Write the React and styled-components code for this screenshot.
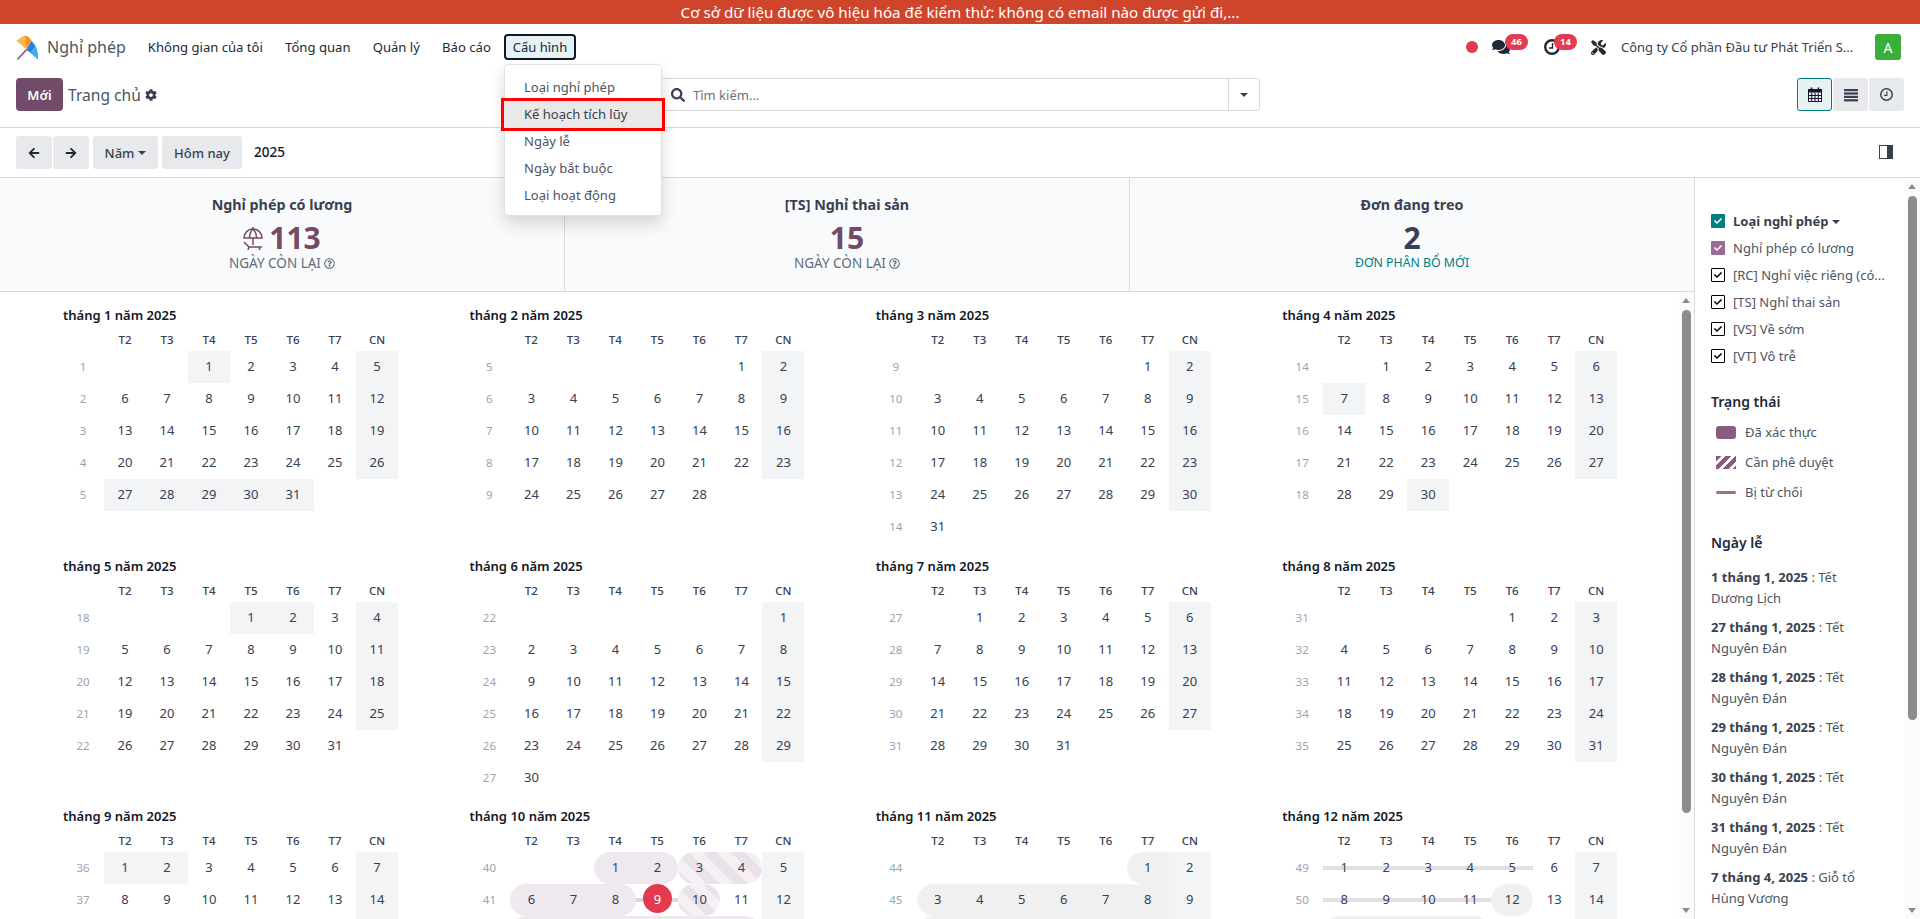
import React from "react";
import styled, { createGlobalStyle } from "styled-components";
import {
  FaArrowLeft,
  FaArrowRight,
  FaCheck,
  FaCog,
  FaComments,
  FaRegQuestionCircle,
  FaSearch,
  FaTools,
} from "react-icons/fa";

const GlobalStyle = createGlobalStyle`
  html, body {
    margin: 0;
    height: 100%;
    overflow: hidden;
    background: #fff;
    font-family: "Noto Sans", "Liberation Sans", sans-serif;
    font-size: 13px;
    color: #374151;
  }
  * { box-sizing: border-box; }
`;

const WEEK_DAYS = ["T2", "T3", "T4", "T5", "T6", "T7", "CN"];

// ngày lễ theo tháng
const HOLIDAYS = {
  0: [1, 27, 28, 29, 30, 31],
  3: [7, 30],
  4: [1, 2],
  8: [1, 2],
};

const EVENTS = {
  9: {
    1: { kind: "solid", span: 2 },
    3: { kind: "hatch", span: 2 },
    6: { kind: "solid", span: 3 },
    9: { kind: "line", span: 1 },
    10: { kind: "hatch", span: 1 },
    13: { kind: "solid", span: 6 },
  },
  10: {
    1: { kind: "grey", span: 2 },
    3: { kind: "grey", span: 7 },
    10: { kind: "grey", span: 7 },
  },
  11: {
    1: { kind: "greyLine", span: 5 },
    8: { kind: "greyLine", span: 4 },
    12: { kind: "grey", span: 1 },
    15: { kind: "grey", span: 4 },
  },
};

const isoWeek = (d) => {
  const t = new Date(Date.UTC(d.getFullYear(), d.getMonth(), d.getDate()));
  const day = t.getUTCDay() || 7;
  t.setUTCDate(t.getUTCDate() + 4 - day);
  const yearStart = new Date(Date.UTC(t.getUTCFullYear(), 0, 1));
  return Math.ceil(((t - yearStart) / 86400000 + 1) / 7);
};

const buildWeeks = (month) => {
  const first = new Date(2025, month, 1);
  const total = new Date(2025, month + 1, 0).getDate();
  const offset = (first.getDay() + 6) % 7;
  const weeks = [];
  let days = Array(offset).fill(null);
  for (let n = 1; n <= total; n++) {
    days.push(n);
    if (days.length === 7) {
      weeks.push(days);
      days = [];
    }
  }
  if (days.length) {
    weeks.push(days.concat(Array(7 - days.length).fill(null)));
  }
  return weeks;
};

const Month = ({ month }) => {
  const weeks = buildWeeks(month);
  const holidays = HOLIDAYS[month] || [];
  const events = EVENTS[month] || {};
  return (
    <MonthBox>
      <MonthTitle>
        tháng {month + 1} năm 2025
      </MonthTitle>
      <DayGrid>
        <HeadCell />
        {WEEK_DAYS.map((d) => (
          <HeadCell key={d}>{d}</HeadCell>
        ))}
        {weeks.map((week) => {
          const firstDay = week.find((d) => d !== null);
          return (
            <React.Fragment key={firstDay}>
              <WeekNo>{isoWeek(new Date(2025, month, firstDay))}</WeekNo>
              {week.map((day, i) => {
                const ev = events[day];
                const today = month === 9 && day === 9;
                return (
                  <DayCell
                    key={i}
                    $off={day !== null && (i === 6 || holidays.includes(day))}
                  >
                    {ev && <Bar $kind={ev.kind} $span={ev.span} />}
                    {today && <Today />}
                    <DayNo $today={today}>{day}</DayNo>
                  </DayCell>
                );
              })}
            </React.Fragment>
          );
        })}
      </DayGrid>
    </MonthBox>
  );
};

const Logo = () => (
  <svg width="23" height="25" viewBox="18 13 70 75">
    <path d="M22 87 L50 57" stroke="#8f5a86" strokeWidth="5" fill="none" />
    <path d="M20 30 C 28 22 36 17 45 15 L50 57 Z" fill="#fcb849" />
    <path d="M45 15 C 52 14 60 20 65 30 L50 57 Z" fill="#f7931e" />
    <path d="M65 30 L78 47 L62 67 L50 57 Z" fill="#2180e8" />
    <path d="M65 30 C 78 42 87 62 85 87 L62 67 L78 47 Z" fill="#39adfb" />
  </svg>
);

const Umbrella = () => (
  <svg width="20" height="23" viewBox="0 0 20 23" fill="none" stroke="#714B67" strokeWidth="1.5">
    <path d="M1 11 C 1 6 5 2 10 2 C 15 2 19 6 19 11 Z" />
    <path d="M10 0 V2 M10 2 C 7 5 6.5 8 6.5 11 M10 2 C 13 5 13.5 8 13.5 11 M10 11 V18" />
    <path d="M1 15 L6 20 H19 M6 20 L5 23 M16 20 L17 23" />
  </svg>
);

const ThickClock = ({ size = 16, color = "#1f2937", width = 2.4 }) => (
  <svg width={size} height={size} viewBox="0 0 16 16" fill="none" stroke={color}>
    <circle cx="8" cy="8" r={8 - width / 2} strokeWidth={width} />
    <path d="M8.5 4 V9 H5" strokeWidth="1.4" />
  </svg>
);

const CalendarIcon = () => (
  <svg width="14" height="15" viewBox="0 0 14 15" fill="none">
    <rect x="0.5" y="2.5" width="13" height="12" stroke="#1f1235" />
    <rect x="0.5" y="2.5" width="13" height="3" fill="#1f1235" />
    <path d="M3.5 0.5 V3.5 M10.5 0.5 V3.5" stroke="#1f1235" strokeWidth="1.6" />
    <path d="M0.5 8.5 H13.5 M0.5 11.5 H13.5 M3.7 5.5 V14.5 M7 5.5 V14.5 M10.3 5.5 V14.5" stroke="#1f1235" />
  </svg>
);

const BarsIcon = () => (
  <svg width="14" height="14" viewBox="0 0 14 14" fill="#374151">
    <rect x="0" y="1" width="14" height="2.2" />
    <rect x="0" y="4.4" width="14" height="2.2" />
    <rect x="0" y="7.8" width="14" height="2.2" />
    <rect x="0" y="11.2" width="14" height="2.2" />
  </svg>
);

const PanelIcon = () => (
  <svg width="14" height="14" viewBox="0 0 14 14">
    <rect x="0.5" y="0.5" width="13" height="13" fill="#fff" stroke="#374151" />
    <rect x="8" y="0.5" width="5.5" height="13" fill="#374151" />
  </svg>
);

const Caret = styled.span`
  display: inline-block;
  margin-left: 4px;
  vertical-align: middle;
  border-top: 4px solid currentColor;
  border-left: 4px solid transparent;
  border-right: 4px solid transparent;
`;

const App = () => (
  <>
    <GlobalStyle />
    <Page>
      <Banner>Cơ sở dữ liệu được vô hiệu hóa để kiểm thử: không có email nào được gửi đi,...</Banner>
      <NavBar>
        <AppBrand>
          <Logo />
          <span>Nghỉ phép</span>
        </AppBrand>
        <NavItem>Không gian của tôi</NavItem>
        <NavItem>Tổng quan</NavItem>
        <NavItem>Quản lý</NavItem>
        <NavItem>Báo cáo</NavItem>
        <MenuAnchor>
          <NavActive>Cấu hình</NavActive>
          <Dropdown>
            <DropItem>Loại nghỉ phép</DropItem>
            <DropItem $marked>Kế hoạch tích lũy</DropItem>
            <DropItem>Ngày lễ</DropItem>
            <DropItem>Ngày bắt buộc</DropItem>
            <DropItem>Loại hoạt động</DropItem>
          </Dropdown>
        </MenuAnchor>
        <NavRight>
          <RedDot />
          <Systray $w={52}>
            <FaComments size={18} color="#1f2937" />
            <Badge $left={13}>46</Badge>
          </Systray>
          <Systray $w={46.5}>
            <ThickClock />
            <Badge $left={10}>14</Badge>
          </Systray>
          <ToolSlot>
            <FaTools size={15} color="#1f2937" />
          </ToolSlot>
          <Company>Công ty Cổ phần Đầu tư Phát Triển S...</Company>
          <Avatar>A</Avatar>
        </NavRight>
      </NavBar>

      <ControlPanel>
        <PanelLeft>
          <PrimaryBtn>Mới</PrimaryBtn>
          <Crumb>Trang chủ</Crumb>
          <FaCog size={12} color="#374151" />
        </PanelLeft>
        <SearchBox>
          <SearchInput>
            <FaSearch size={14} color="#374151" />
            <span>Tìm kiếm...</span>
          </SearchInput>
          <SearchCaret>
            <Caret />
          </SearchCaret>
        </SearchBox>
        <ViewSwitch>
          <ViewBtn $active>
            <CalendarIcon />
          </ViewBtn>
          <ViewBtn>
            <BarsIcon />
          </ViewBtn>
          <ViewBtn>
            <ThickClock size={13} color="#374151" width={1.8} />
          </ViewBtn>
        </ViewSwitch>
      </ControlPanel>

      <DateBar>
        <BtnGroup>
          <GreyBtn $w={36}>
            <FaArrowLeft size={12} color="#1f2937" />
          </GreyBtn>
          <GreyBtn $w={36}>
            <FaArrowRight size={12} color="#1f2937" />
          </GreyBtn>
        </BtnGroup>
        <GreyBtn $w={65}>
          Năm
          <Caret />
        </GreyBtn>
        <GreyBtn $w={80}>Hôm nay</GreyBtn>
        <YearLabel>2025</YearLabel>
        <PanelToggle>
          <PanelIcon />
        </PanelToggle>
      </DateBar>

      <Body>
        <MainCol>
          <Stats>
            <Stat>
              <StatTitle>Nghỉ phép có lương</StatTitle>
              <StatNumber>
                <Umbrella />
                113
              </StatNumber>
              <StatNote>
                NGÀY CÒN LẠI <FaRegQuestionCircle size={11} />
              </StatNote>
            </Stat>
            <Stat>
              <StatTitle>[TS] Nghỉ thai sản</StatTitle>
              <StatNumber>15</StatNumber>
              <StatNote>
                NGÀY CÒN LẠI <FaRegQuestionCircle size={11} />
              </StatNote>
            </Stat>
            <Stat>
              <StatTitle>Đơn đang treo</StatTitle>
              <StatNumber $dark>2</StatNumber>
              <StatNote $link>ĐƠN PHÂN BỔ MỚI</StatNote>
            </Stat>
          </Stats>
          <CalendarWrap>
            <YearGrid>
              {Array.from({ length: 12 }, (_, m) => (
                <Month key={m} month={m} />
              ))}
            </YearGrid>
            <ScrollTrack>
              <ScrollArrow $dir="up" />
              <ScrollThumb $top={18} $height={503} />
              <ScrollArrow $dir="down" />
            </ScrollTrack>
          </CalendarWrap>
        </MainCol>

        <Side>
          <FilterRow>
            <Check $tone="teal">
              <FaCheck size={8} color="#fff" />
            </Check>
            <FilterHead>
              Loại nghỉ phép
              <Caret />
            </FilterHead>
          </FilterRow>
          <FilterRow>
            <Check $tone="plum">
              <FaCheck size={8} color="#fff" />
            </Check>
            <span>Nghỉ phép có lương</span>
          </FilterRow>
          {["[RC] Nghỉ việc riêng (có...", "[TS] Nghỉ thai sản", "[VS] Về sớm", "[VT] Vô trễ"].map((t) => (
            <FilterRow key={t}>
              <Check>
                <FaCheck size={8} color="#000" />
              </Check>
              <span>{t}</span>
            </FilterRow>
          ))}
          <SideHeading $mt={22} $mb={4}>Trạng thái</SideHeading>
          <LegendRow>
            <Swatch $kind="solid" />
            Đã xác thực
          </LegendRow>
          <LegendRow>
            <Swatch $kind="hatch" />
            Cần phê duyệt
          </LegendRow>
          <LegendRow>
            <Swatch $kind="line" />
            Bị từ chối
          </LegendRow>
          <SideHeading $mt={24.5} $mb={13}>Ngày lễ</SideHeading>
          <HolidayList>
            <Holiday><b>1 tháng 1, 2025</b> : Tết Dương Lịch</Holiday>
            <Holiday><b>27 tháng 1, 2025</b> : Tết Nguyên Đán</Holiday>
            <Holiday><b>28 tháng 1, 2025</b> : Tết Nguyên Đán</Holiday>
            <Holiday><b>29 tháng 1, 2025</b> : Tết Nguyên Đán</Holiday>
            <Holiday><b>30 tháng 1, 2025</b> : Tết Nguyên Đán</Holiday>
            <Holiday><b>31 tháng 1, 2025</b> : Tết Nguyên Đán</Holiday>
            <Holiday><b>7 tháng 4, 2025</b> : Giỗ tổ Hùng Vương</Holiday>
          </HolidayList>
          <ScrollTrack>
            <ScrollArrow $dir="up" />
            <ScrollThumb $top={18} $height={524} />
            <ScrollArrow $dir="down" />
          </ScrollTrack>
        </Side>
      </Body>
    </Page>
  </>
);

const Page = styled.div`
  display: flex;
  flex-direction: column;
  width: 1920px;
  height: 919px;
  overflow: hidden;
`;

const Banner = styled.div`
  flex: 0 0 24px;
  background: #cf452b;
  color: #fff;
  font-size: 15.2px;
  line-height: 24px;
  text-align: center;
`;

const NavBar = styled.div`
  flex: 0 0 46px;
  display: flex;
  align-items: center;
  padding-left: 16px;
  padding-right: 19px;
`;

const AppBrand = styled.div`
  display: flex;
  align-items: center;
  gap: 8px;
  font-size: 16px;
  color: #4b5563;
  margin-right: 22px;
`;

const NavItem = styled.div`
  font-size: 13.1px;
  color: #1f2937;
  margin-right: 22.2px;
  white-space: nowrap;
`;

const MenuAnchor = styled.div`
  position: relative;
  margin-left: -9px;
`;

const NavActive = styled.div`
  width: 72px;
  height: 26px;
  border: 2px solid #111827;
  border-radius: 4px;
  background: #e6f2f3;
  color: #1f2937;
  display: flex;
  align-items: center;
  justify-content: center;
`;

const Dropdown = styled.div`
  position: absolute;
  top: 30px;
  left: 0;
  width: 158px;
  height: 152px;
  padding-top: 9px;
  background: #fff;
  border: 1px solid #dee2e6;
  border-radius: 4px;
  box-shadow: 0 8px 16px rgba(0, 0, 0, 0.15);
  z-index: 10;
`;

const DropItem = styled.div`
  height: 27px;
  line-height: 27px;
  padding-left: 19px;
  font-size: 13px;
  color: #4b5563;
  white-space: nowrap;
  ${(p) =>
    p.$marked &&
    `
    background: #e9e9e9;
    box-shadow: 0 0 0 3px #f00;
    position: relative;
    margin: 0 -1px;
    padding-left: 20px;
    color: #374151;
  `}
`;

const NavRight = styled.div`
  margin-left: auto;
  display: flex;
  align-items: center;
`;

const RedDot = styled.span`
  width: 12px;
  height: 12px;
  border-radius: 50%;
  background: #dc3f45;
  margin-right: 14px;
`;

const Systray = styled.div`
  position: relative;
  width: ${(p) => p.$w}px;
  height: 26px;
  display: flex;
  align-items: center;
`;

const Badge = styled.span`
  position: absolute;
  top: 0;
  left: ${(p) => p.$left}px;
  height: 16px;
  padding: 0 6px;
  border-radius: 8px;
  background: #e23c50;
  color: #fff;
  font-size: 9.5px;
  font-weight: 700;
  line-height: 16px;
`;

const ToolSlot = styled.div`
  width: 30.5px;
  display: flex;
  align-items: center;
`;

const Company = styled.div`
  font-size: 13px;
  color: #374151;
  width: 254px;
  white-space: nowrap;
`;

const Avatar = styled.div`
  width: 26px;
  height: 26px;
  border-radius: 3px;
  background: #3aaf3c;
  color: #fff;
  font-size: 14px;
  display: flex;
  align-items: center;
  justify-content: center;
`;

const ControlPanel = styled.div`
  flex: 0 0 58px;
  display: flex;
  align-items: flex-start;
  padding: 8px 16px 0;
  border-bottom: 1px solid #d8dadd;
  position: relative;
`;

const PanelLeft = styled.div`
  width: 602px;
  display: flex;
  align-items: center;
  gap: 4px;
`;

const PrimaryBtn = styled.div`
  width: 47px;
  height: 33px;
  background: #714b67;
  color: #fff;
  border-radius: 4px;
  font-size: 13px;
  font-weight: 600;
  display: flex;
  align-items: center;
  justify-content: center;
  margin-right: 1px;
`;

const Crumb = styled.div`
  font-size: 15.6px;
  color: #4b5563;
`;

const SearchBox = styled.div`
  width: 642px;
  height: 33px;
  display: flex;
  border: 1px solid #d8dadd;
  border-radius: 3px;
`;

const SearchInput = styled.div`
  flex: 1;
  display: flex;
  align-items: center;
  gap: 8px;
  padding-left: 52px;
  color: #6b7280;
  font-size: 13px;
`;

const SearchCaret = styled.div`
  width: 31px;
  border-left: 1px solid #d8dadd;
  display: flex;
  align-items: center;
  justify-content: center;
  color: #374151;

  ${Caret} {
    margin-left: 0;
  }
`;

const ViewSwitch = styled.div`
  margin-left: auto;
  display: flex;
  gap: 1px;
`;

const ViewBtn = styled.div`
  width: 35px;
  height: 33px;
  display: flex;
  align-items: center;
  justify-content: center;
  background: ${(p) => (p.$active ? "#e6f2f3" : "#e7e9ed")};
  border: ${(p) => (p.$active ? "1px solid #017e84" : "none")};
  border-radius: 3px;
`;

const DateBar = styled.div`
  flex: 0 0 50px;
  display: flex;
  align-items: flex-start;
  gap: 4px;
  padding: 8px 27px 0 16px;
  border-bottom: 1px solid #d8dadd;
`;

const BtnGroup = styled.div`
  display: flex;
  gap: 1px;
`;

const GreyBtn = styled.div`
  width: ${(p) => p.$w}px;
  height: 33px;
  background: #e7e9ed;
  border-radius: 3px;
  color: #374151;
  font-size: 13px;
  font-weight: 500;
  display: flex;
  align-items: center;
  justify-content: center;
`;

const YearLabel = styled.div`
  margin-left: 8px;
  font-size: 13.5px;
  font-weight: 500;
  color: #111827;
  line-height: 33px;
`;

const PanelToggle = styled.div`
  margin-left: auto;
  padding-top: 9px;
`;

const Body = styled.div`
  flex: 1;
  min-height: 0;
  display: flex;
`;

const MainCol = styled.div`
  width: 1695px;
  display: flex;
  flex-direction: column;
  border-right: 1px solid #d8dadd;
  min-height: 0;
`;

const Stats = styled.div`
  flex: 0 0 114px;
  display: grid;
  grid-template-columns: 565px 565px 1fr;
  background: #f9fafb;
  border-bottom: 1px solid #d8dadd;
`;

const Stat = styled.div`
  display: flex;
  flex-direction: column;
  align-items: center;
  padding-top: 16px;
  border-right: 1px solid #d8dadd;

  &:last-child {
    border-right: none;
  }
`;

const StatTitle = styled.div`
  font-size: 14.3px;
  font-weight: 700;
  line-height: 22px;
  color: #374151;
`;

const StatNumber = styled.div`
  display: flex;
  align-items: center;
  gap: 6px;
  margin-top: 4px;
  font-size: 30px;
  font-weight: 700;
  line-height: 36px;
  color: ${(p) => (p.$dark ? "#374151" : "#714b67")};
`;

const StatNote = styled.div`
  display: flex;
  align-items: center;
  gap: 3px;
  margin-top: -4px;
  font-size: ${(p) => (p.$link ? "12.3px" : "13.5px")};
  line-height: 22px;
  color: ${(p) => (p.$link ? "#017e84" : "#5f6b7a")};
`;

const CalendarWrap = styled.div`
  flex: 1;
  min-height: 0;
  position: relative;
  overflow: hidden;
`;

const YearGrid = styled.div`
  display: grid;
  grid-template-columns: repeat(4, 336px);
  column-gap: 70.4px;
  padding: 13px 0 0 62px;
`;

const MonthBox = styled.div`
  height: 250.5px;
`;

const MonthTitle = styled.div`
  font-size: 13px;
  font-weight: 600;
  line-height: 20px;
  color: #111827;
  padding-left: 1px;
`;

const DayGrid = styled.div`
  display: grid;
  grid-template-columns: repeat(8, 42px);
  grid-auto-rows: 32px;
  grid-template-rows: 26px;
`;

const HeadCell = styled.div`
  font-size: 11.5px;
  font-weight: 500;
  line-height: 29px;
  text-align: center;
  color: #374151;
`;

const WeekNo = styled.div`
  font-size: 11.5px;
  line-height: 32px;
  text-align: center;
  color: #9ca3af;
`;

const DayCell = styled.div`
  position: relative;
  background: ${(p) => (p.$off ? "#f3f4f6" : "transparent")};
  text-align: center;
  line-height: 31px;
`;

const barStyles = {
  solid: "top: 0; bottom: 0; background: #f0e8ef; border-radius: 16px;",
  hatch: `top: 0; bottom: 0; border-radius: 16px;
    background: repeating-linear-gradient(45deg, #ebe1e9 0 10px, #f5f0f4 10px 20px);`,
  line: "top: 14px; height: 4px; background: #e2d3de;",
  grey: "top: 0; bottom: 0; background: rgba(0, 0, 0, 0.06); border-radius: 16px;",
  greyLine: "top: 14px; height: 4px; background: #e1e1e1;",
};

const Bar = styled.span`
  position: absolute;
  left: 0;
  width: ${(p) => p.$span * 42}px;
  ${(p) => barStyles[p.$kind]}
`;

const Today = styled.span`
  position: absolute;
  left: 6.5px;
  top: 0;
  width: 29px;
  height: 29px;
  border-radius: 50%;
  background: #e03b4f;
`;

const DayNo = styled.span`
  position: relative;
  font-size: 13px;
  color: ${(p) => (p.$today ? "#fff" : "#374151")};
`;

const ScrollTrack = styled.div`
  position: absolute;
  top: 0;
  right: 0;
  bottom: 0;
  width: 15px;
  background: #fbfbfb;
`;

const ScrollThumb = styled.div`
  position: absolute;
  left: 3px;
  top: ${(p) => p.$top}px;
  width: 9px;
  height: ${(p) => p.$height}px;
  background: #8c8c8c;
  border-radius: 5px;
`;

const ScrollArrow = styled.span`
  position: absolute;
  left: 3px;
  width: 0;
  height: 0;
  border-left: 4.5px solid transparent;
  border-right: 4.5px solid transparent;
  ${(p) =>
    p.$dir === "up"
      ? "top: 6px; border-bottom: 5px solid #8c8c8c;"
      : "bottom: 6px; border-top: 5px solid #8c8c8c;"}
`;

const Side = styled.div`
  flex: 1;
  position: relative;
  padding: 29px 0 0 16px;
  font-size: 13px;
  color: #4b5563;
  overflow: hidden;
`;

const FilterRow = styled.div`
  display: flex;
  align-items: center;
  gap: 8px;
  height: 27px;
  white-space: nowrap;
  font-size: 13px;
`;

const FilterHead = styled.span`
  font-weight: 700;
  color: #374151;
`;

const checkTones = {
  teal: "background: #017e84; border: none;",
  plum: "background: #9b6a93; border: none;",
};

const Check = styled.span`
  flex: 0 0 14px;
  width: 14px;
  height: 14px;
  border: 1px solid #000;
  border-radius: 1px;
  background: #fff;
  display: flex;
  align-items: center;
  justify-content: center;
  ${(p) => checkTones[p.$tone] || ""}
`;

const SideHeading = styled.div`
  margin-top: ${(p) => p.$mt}px;
  margin-bottom: ${(p) => p.$mb}px;
  font-size: 14px;
  font-weight: 600;
  line-height: 22px;
  color: #1f2937;
`;

const LegendRow = styled.div`
  display: flex;
  align-items: center;
  gap: 9px;
  height: 30px;
  padding-left: 5px;
  font-size: 13px;
`;

const swatchStyles = {
  solid: "height: 13px; background: #8a5d80; border-radius: 3px;",
  hatch: "height: 13px; background: repeating-linear-gradient(135deg, #8a5d80 0 4px, #fff 4px 7px);",
  line: "height: 3px; background: #9a6f91; border-radius: 2px;",
};

const Swatch = styled.span`
  flex: 0 0 20px;
  ${(p) => swatchStyles[p.$kind]}
`;

const HolidayList = styled.div`
  width: 170px;
`;

const Holiday = styled.div`
  font-size: 13px;
  line-height: 21.3px;
  margin-bottom: 7.5px;
  color: #4b5563;

  b {
    font-weight: 700;
    color: #374151;
  }
`;

export default App;
